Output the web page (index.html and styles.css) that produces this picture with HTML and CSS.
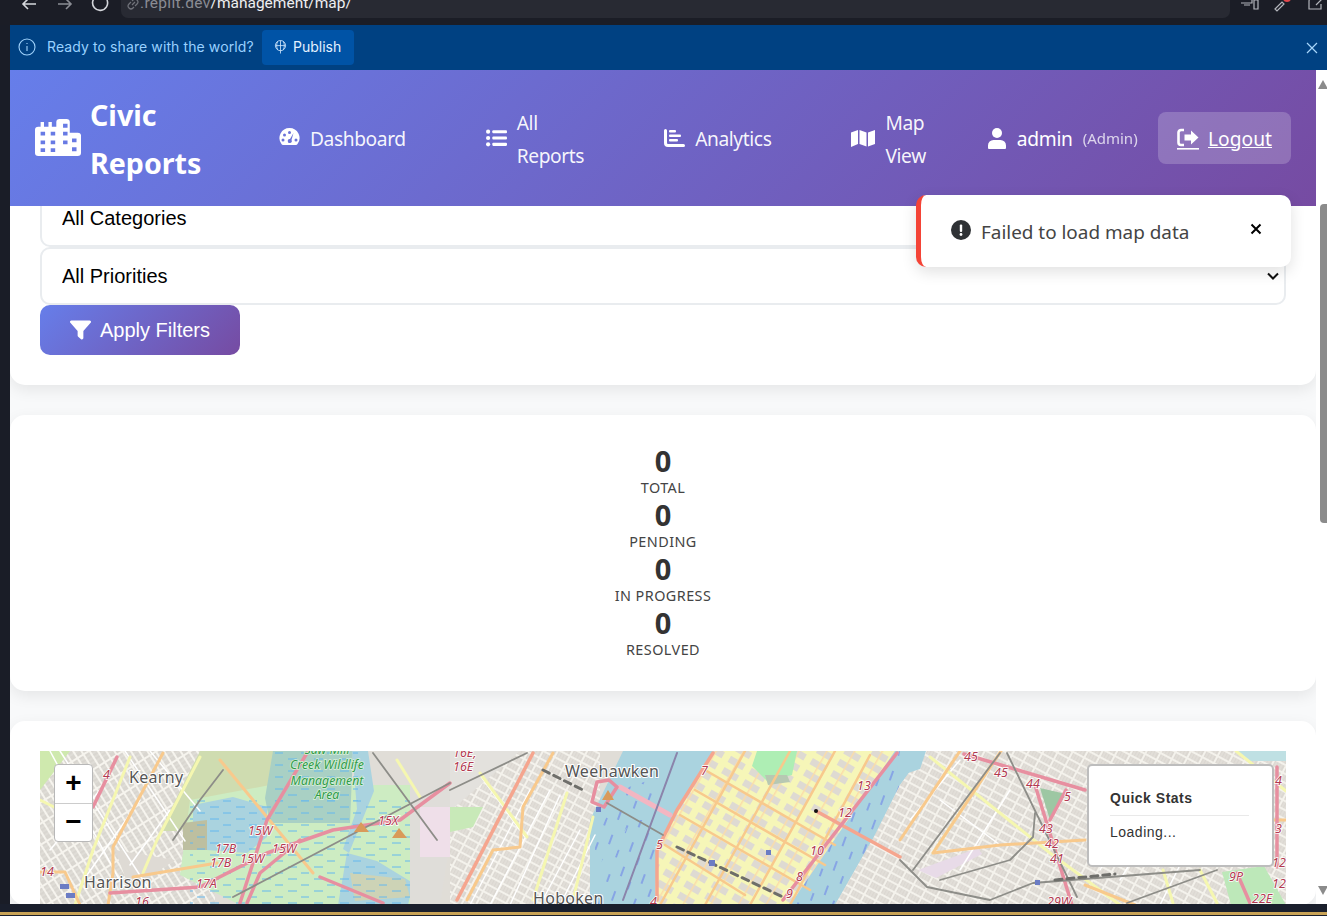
FILE: index.html
```html
<!DOCTYPE html>
<html lang="en">

<head>
    <meta charset="UTF-8">
    <meta name="viewport" content="width=device-width, initial-scale=1.0">
    <title>Map View - Civic Reports</title>
    <link rel="stylesheet" href="styles.css">
</head>

<body>
    <!-- browser chrome, cut at the top of the shot -->
    <div class="chrome">
        <svg class="chrome-icon back" viewBox="0 0 16 16"><path d="M15 5H2M7 0 2 5l5 5" /></svg>
        <svg class="chrome-icon forward" viewBox="0 0 16 16"><path d="M1 5h13M9 0l5 5-5 5" /></svg>
        <svg class="chrome-icon reload" viewBox="0 0 18 18"><path d="M16 6A7.500 7.500 0 1 1 13 2.500M16 0v5h-5" /></svg>
        <div class="urlbar">
            <svg class="url-link" viewBox="0 0 14 14"><path d="M6 8 9 5M5 5 3 7a2.500 2.500 0 0 0 4 4l1-1M9 9l2-2a2.500 2.500 0 0 0-4-4L6 4" /></svg>
            <span class="url-host">.replit.dev</span><span class="url-path">/management/map/</span>
        </div>
        <div class="chrome-right">
            <svg class="chrome-tool" viewBox="0 0 20 14"><path d="M1 1h11v5H1M4 8h6M14 3h4v9h-4z" /></svg>
            <svg class="chrome-tool" viewBox="0 0 20 14"><path d="M2 12l7-7 2 2-7 7z" /><circle class="chrome-dot" cx="14" cy="1" r="4" /></svg>
            <svg class="chrome-tool" viewBox="0 0 20 14"><path d="M12 2H5a2 2 0 0 0-2 2v8h12V7M10 8l7-7" /></svg>
        </div>
    </div>

    <div class="replit-bar">
        <svg class="rb-info" viewBox="0 0 18 18"><circle cx="9" cy="9" r="8" /><path d="M9 8v5M9 5v1" /></svg>
        <span class="rb-text">Ready to share with the world?</span>
        <button class="rb-publish">
            <svg viewBox="0 0 14 14"><circle cx="7" cy="5.500" r="5.500" /><path d="M7 0v14M1.500 5.500h11M4 1c-1.500 3-1.500 6 0 9M10 1c1.500 3 1.500 6 0 9" /></svg>
            <span>Publish</span>
        </button>
        <svg class="rb-close" viewBox="0 0 12 12"><path d="M1 1l10 10M11 1 1 11" /></svg>
    </div>

    <div class="window">
        <div class="page">
            <header class="topbar">
                <a class="brand">
                    <svg class="brand-icon" viewBox="0 0 41 38" preserveAspectRatio="none">
                        <path fill-rule="evenodd" d="M5 8V3h3v5h4V3h3v5h4V3a3 3 0 0 1 3-3h6a3 3 0 0 1 3 3v11h7a3 3 0 0 1 3 3v18a3 3 0 0 1-3 3H3a3 3 0 0 1-3-3V11a3 3 0 0 1 3-3zM5 13v4h4v-4zM5 22v4h4v-4zM5 30v4h4v-4zM14 13v4h4v-4zM14 22v4h4v-4zM14 30v4h4v-4zM25 5v4h4V5zM25 13v4h4v-4zM25 22v4h4v-4zM33 20v4h4v-4zM33 29v4h4v-4z" />
                    </svg>
                    <span class="brand-name">Civic Reports</span>
                </a>
                <nav class="nav">
                    <a class="nav-link">
                        <svg class="nav-icon" viewBox="0 0 20 20"><path fill-rule="evenodd" d="M10 0a10 10 0 0 1 8 16c-.500.700-1 1-2 1H4c-1 0-1.500-.300-2-1A10 10 0 0 1 10 0zM10 3a1.500 1.500 0 1 0 0 3 1.500 1.500 0 0 0 0-3zM5 5.500a1.500 1.500 0 1 0 0 3 1.500 1.500 0 0 0 0-3zM3.500 10.500a1.500 1.500 0 1 0 0 3 1.500 1.500 0 0 0 0-3zM16.500 10.500a1.500 1.500 0 1 0 0 3 1.500 1.500 0 0 0 0-3zM14 5l-3.500 6a2 2 0 1 0 1.500 1z" /></svg>
                        <span>Dashboard</span>
                    </a>
                    <a class="nav-link">
                        <svg class="nav-icon" viewBox="0 0 20 18"><circle cx="2" cy="3" r="2" /><circle cx="2" cy="9" r="2" /><circle cx="2" cy="15" r="2" /><rect x="6" y="1.500" width="14" height="3" rx="1" /><rect x="6" y="7.500" width="14" height="3" rx="1" /><rect x="6" y="13.500" width="14" height="3" rx="1" /></svg>
                        <span class="nav-wrap">All Reports</span>
                    </a>
                    <a class="nav-link">
                        <svg class="nav-icon" viewBox="0 0 21 18"><path d="M0 1.500a1.500 1.500 0 0 1 3 0V14a1 1 0 0 0 1 1h15.500a1.500 1.500 0 0 1 0 3H4a4 4 0 0 1-4-4z" /><rect x="5" y="1" width="7" height="2.500" rx="1" /><rect x="5" y="5.500" width="12" height="2.500" rx="1" /><rect x="5" y="10" width="9" height="2.500" rx="1" /></svg>
                        <span>Analytics</span>
                    </a>
                    <a class="nav-link">
                        <svg class="nav-icon map-icon" viewBox="0 0 24 18"><path d="M0 3.500 7 1v14l-7 3zM8.500 1l7 2.500v14l-7-2.500zM17 3.500 24 1v14l-7 2.500z" /></svg>
                        <span class="nav-wrap">Map View</span>
                    </a>
                </nav>
                <div class="account">
                    <svg class="account-icon" viewBox="0 0 18 21"><circle cx="9" cy="5" r="5" /><path d="M5.500 12h7A5.500 5.500 0 0 1 18 17.500V20a1 1 0 0 1-1 1H1a1 1 0 0 1-1-1v-2.500A5.500 5.500 0 0 1 5.500 12z" /></svg>
                    <span class="account-name">admin</span>
                    <span class="account-role">(Admin)</span>
                </div>
                <a class="logout">
                    <svg class="logout-icon" viewBox="0 0 22 22"><path d="M7 2H4a2.500 2.500 0 0 0-2.500 2.500v10A2.500 2.500 0 0 0 4 17h3" class="logout-bracket" /><path d="M21.500 9.500 14 2.500v4H7.500v6H14v4z" /><rect y="20" width="22" height="1.600" /></svg>
                    <span class="logout-text">Logout</span>
                </a>
            </header>

            <div class="toast">
                <svg class="toast-icon" viewBox="0 0 20 20"><circle cx="10" cy="10" r="10" /><rect class="toast-mark" x="8.800" y="4.500" width="2.400" height="7.500" rx="1" /><circle class="toast-mark" cx="10" cy="14.500" r="1.400" /></svg>
                <span class="toast-text">Failed to load map data</span>
                <svg class="toast-close" viewBox="0 0 12 12"><path d="M1.500 1.500l9 9M10.500 1.500l-9 9" /></svg>
            </div>

            <main class="content">
                <section class="card filters">
                    <select class="filter-select first">
                        <option>All Categories</option>
                    </select>
                    <select class="filter-select">
                        <option>All Priorities</option>
                    </select>
                    <button class="apply-btn">
                        <svg viewBox="0 0 22 20"><path d="M1.500 0h19a1.500 1.500 0 0 1 1.100 2.500L14 11v7.500a1.500 1.500 0 0 1-2.400 1.100l-3-2.500A1.500 1.500 0 0 1 8 16v-5L.400 2.500A1.500 1.500 0 0 1 1.500 0z" /></svg>
                        Apply Filters
                    </button>
                </section>

                <section class="card stats">
                    <div class="stat"><div class="stat-num">0</div><div class="stat-label">Total</div></div>
                    <div class="stat"><div class="stat-num">0</div><div class="stat-label">Pending</div></div>
                    <div class="stat"><div class="stat-num">0</div><div class="stat-label">In Progress</div></div>
                    <div class="stat"><div class="stat-num">0</div><div class="stat-label">Resolved</div></div>
                </section>

                <section class="card map-card">
                    <div class="map">
                        <!-- coordinates in the viewBox follow the window, so map features read as screen positions -->
                        <svg class="tiles" viewBox="40 751 1246 154" preserveAspectRatio="none">
                            <defs>
                                <pattern id="homes" width="13" height="8" patternUnits="userSpaceOnUse" patternTransform="rotate(28)">
                                    <rect width="13" height="8" fill="#f4f2ec" />
                                    <rect x="1" y="1" width="11" height="6" fill="#dbd7d1" />
                                    <path d="M3 1v6M6 1v6M9 1v6" stroke="#efece6" stroke-width=".6" />
                                </pattern>
                                <pattern id="homes2" width="18" height="7" patternUnits="userSpaceOnUse" patternTransform="rotate(58)">
                                    <rect width="18" height="7" fill="#f6f4ee" />
                                    <rect x="1" y="1" width="16" height="5" fill="#d9d6d0" />
                                    <path d="M4 1v5M8 1v5M12 1v5" stroke="#efece6" stroke-width=".6" />
                                </pattern>
                                <pattern id="midtown" width="24" height="13" patternUnits="userSpaceOnUse" patternTransform="rotate(30)">
                                    <rect width="24" height="13" fill="#f6f6b8" />
                                    <rect x="3" y="3" width="17" height="7" fill="#dedad2" />
                                    <rect x="11" y="0" width="1.500" height="13" fill="#fbdca8" />
                                </pattern>
                                <pattern id="marsh" width="26" height="12" patternUnits="userSpaceOnUse">
                                    <path d="M2 3h9M15 9h8" stroke="#63b8ee" stroke-width="1" />
                                </pattern>
                                <pattern id="ripple" width="22" height="26" patternUnits="userSpaceOnUse" patternTransform="rotate(20)">
                                    <path d="M3 3v10M14 15v8" stroke="#6a80ea" stroke-width="1.100" />
                                </pattern>
                            </defs>

                            <g class="base">
                                <rect x="40" y="751" width="1246" height="154" fill="#e0ddd7" />
                                <!-- west side -->
                                <rect x="40" y="751" width="175" height="154" fill="url(#homes2)" />
                                <path d="M40 751h30L40 790z" fill="#cfe9ae" />
                                <path d="M175 860l-60-10 15 40z" fill="#dedad4" />
                                <!-- the meadows -->
                                <path d="M200 751h100l-10 40-70 10-40 30-20 0z" fill="#cfdcb0" />
                                <path d="M190 800l80-15h140l10 30-10 90H240l-60-30z" fill="#cdecc2" />
                                <path d="M273 751h80l-3 72-80 0-5-25z" fill="#a9d0c4" />
                                <path d="M193 805l40-8 34 10 0 30-20 16-40-3-14-25z" fill="#aad3df" />
                                <path d="M183 823l24-3v30h-24z" fill="#bdbfa0" />
                                <path d="M347 853l30 8 36 22-5 22h-70z" fill="#aad3df" />
                                <path d="M350 873l55 6 5 18-55 4z" fill="#cdd3b6" />
                                <path d="M352 751h16l6 40-25 62-6-4 14-40z" fill="#aad3df" />
                                <path d="M190 800h220v105H190z" fill="url(#marsh)" />
                                <path d="M273 751h85v50h-85z" fill="url(#marsh)" />
                                <!-- past the turnpike -->
                                <path d="M410 751h55l-25 154h-30z" fill="#dfddd9" />
                                <path d="M420 807h30v50h-30z" fill="#efdfe9" />
                                <rect x="450" y="751" width="150" height="154" fill="url(#homes)" />
                                <path d="M450 751h70l-70 60z" fill="#e3e1dd" />
                                <path d="M450 807h33l-10 20-23 5z" fill="#c8e9b8" />
                                <!-- hudson -->
                                <path d="M623 751h90l-36 59-20 40-2 55h-65v-85z" fill="#aad3df" />
                                <path d="M620 790l60-20-40 40-45 60v-30zM630 820h25v85h-60z" fill="url(#ripple)" />
                                <!-- manhattan -->
                                <path d="M713 751h182l-105 154H655l2-55 20-40z" fill="url(#midtown)" />
                                <path d="M757 751h40l-5 24-25 6-15-15z" fill="#aeeeb4" />
                                <path d="M765 775h22l3 7-22 3z" fill="#b7c8b2" />
                                <!-- east river -->
                                <path d="M895 751h30l-25 34-25 50-40 70h-45z" fill="#aad3df" />
                                <path d="M895 751h30l-25 34-25 50-40 70h-45z" fill="url(#ripple)" />
                                <!-- queens -->
                                <path d="M925 751h361v154H835l40-70 25-50z" fill="url(#homes)" />
                                <path d="M900 751h26l-6 18-24 8z" fill="#aad3df" />
                                <path d="M1040 788l26 6-16 26z" fill="#9dc7a3" />
                                <path d="M1222 872l42-6 22 39h-55z" fill="#bde8b9" />
                                <path d="M918 870l60-22 4 6-46 24z" fill="#e8dbe8" />
                                <path d="M1236 751h50v10h-38z" fill="#bfe0e3" />

                                <!-- streets -->
                                <path class="rd-minor" d="M50 751l70 130M60 751l90 140M125 751l60 90M150 751l50 60M100 790l-50 60M140 800l-60 85M170 810l-40 55M470 905l60-115M490 905l60-115M510 905l50-110M540 905l40-75M560 905l35-70M480 775l45 62M960 760l-50 60M1120 880l60-100M1160 905l50-100M1010 790l-50 80M1100 870l40-70M940 800l60 45" />
                                <path class="rd-second" d="M130 757 93 850 75 905M200 757l-43 83-14 33M40 800l50 25M397 760l23 37M480 773l47 64M567 793l-34 107M593 817l-20 83M930 757l120 96 70 52M990 767l-57 86M1163 870l10 33M1200 870l17 33M1236 751l50 40" />
                                <path class="rd-prime" d="M163 753 113 847v26l-5 32M133 877l84-14M220 760l93 113M553 753l-30 54-3 40-27 3-26 50M40 872h25l15 33M1001 751l-68 102 67-8 85-5M960 751l-60 89M1085 885l50 20M1240 820h46" />
                                <path class="rd-prime thin" d="M705 770l130 75M695 790l130 75M680 815l130 75M665 845l80 50M745 751l-85 154M790 751l-85 154M835 751l-85 154M870 755l-80 150" />
                                <path class="rd-trunk" d="M533 753 457 900M713 753 677 810 657 850v50M816 811l84 46" />
                                <path class="rd-bridge" d="M620 787l50 28" />
                                <path class="rd-motor" d="M117 757 93 807M110 893l90-6 67-34 66-23 67-10 50-37M240 903l27-83 40-67M247 903l13-30 40-33M320 877l63 26M597 782l-5 20 12 5 13-20-8-7zM897 753 783 900M964 754l121 36M1035 785l37 120M1066 790l-16 30M1277 767v100M1237 873l13 30" />
                                <path class="rd-rail" d="M173 840l27-40 23-30M233 897l217-114M373 753l64 87M527 753l-77 37M607 803l56 32M900 860l27 27 63 13 43-17 167-13M940 880l70-20 23-23 2-24M1127 903l90-33M1000 753l-87 117M1007 753l70 144" />
                                <path class="rd-dash" d="M677 847l106 50M543 770l40 20M1055 880l60-6" />
                                <path class="rd-purple" d="M677 753l-54 147" />
                                <circle cx="816" cy="811" r="2" fill="#111" />
                                <path d="M602 800l6-10 6 10z" fill="#d99a59" />
                                <path d="M354 832l7-10 8 10zM392 838l7-10 8 10z" fill="#d99a59" />
                                <rect x="596" y="807" width="5" height="5" fill="#6b7cc4" />
                                <rect x="766" y="850" width="5" height="5" fill="#6b7cc4" />
                                <rect x="709" y="860" width="6" height="6" fill="#6b7cc4" />
                                <rect x="1035" y="880" width="5" height="5" fill="#6b7cc4" />
                                <rect x="60" y="884" width="9" height="5" fill="#6b7cc4" />
                                <rect x="66" y="893" width="9" height="5" fill="#6b7cc4" />
                            </g>

                            <g class="map-green">
                                <text x="327" y="769">Creek Wildlife</text>
                                <text x="327" y="785">Management</text>
                                <text x="327" y="799">Area</text>
                                <text x="327" y="754">Saw Mill</text>
                            </g>
                            <g class="map-town">
                                <text x="129" y="783">Kearny</text>
                                <text x="84" y="888">Harrison</text>
                                <text x="565" y="777">Weehawken</text>
                                <text x="533" y="904">Hoboken</text>
                            </g>
                            <g class="map-ref">
                                <text x="103" y="779">4</text>
                                <text x="248" y="835">15W</text>
                                <text x="272" y="853">15W</text>
                                <text x="240" y="863">15W</text>
                                <text x="215" y="853">17B</text>
                                <text x="210" y="867">17B</text>
                                <text x="196" y="888">17A</text>
                                <text x="378" y="825">15X</text>
                                <text x="40" y="876">14</text>
                                <text x="135" y="906">16</text>
                                <text x="453" y="757">16E,</text>
                                <text x="453" y="771">16E</text>
                                <text x="701" y="775">7</text>
                                <text x="656" y="849">5</text>
                                <text x="650" y="906">4</text>
                                <text x="857" y="790">13</text>
                                <text x="838" y="817">12</text>
                                <text x="810" y="855">10</text>
                                <text x="796" y="881">8</text>
                                <text x="786" y="898">9</text>
                                <text x="964" y="761">45</text>
                                <text x="994" y="777">45</text>
                                <text x="1026" y="788">44</text>
                                <text x="1064" y="801">5</text>
                                <text x="1039" y="833">43</text>
                                <text x="1045" y="848">42</text>
                                <text x="1050" y="863">41</text>
                                <text x="1047" y="906">29W</text>
                                <text x="1229" y="881">9P</text>
                                <text x="1272" y="867">12</text>
                                <text x="1272" y="888">12</text>
                                <text x="1252" y="903">22E</text>
                                <text x="1275" y="785">4</text>
                                <text x="1275" y="833">3</text>
                            </g>
                        </svg>
                        <div class="zoom-ctl">
                            <a class="zoom-btn">+</a>
                            <a class="zoom-btn">−</a>
                        </div>
                        <div class="quick-stats">
                            <h4>Quick Stats</h4>
                            <p>Loading...</p>
                        </div>
                    </div>
                </section>
            </main>
        </div>

        <div class="scrollbar">
            <span class="sb-up"></span>
            <span class="sb-thumb"></span>
            <span class="sb-down"></span>
        </div>
    </div>

    <div class="statusline"></div>
</body>

</html>
```
FILE: styles.css
```css
* {
    box-sizing: border-box;
}

html,
body {
    height: 100%;
}

body {
    margin: 0;
    height: 916px;
    background: #1a1d27;
    display: flex;
    flex-direction: column;
    overflow: hidden;
    font-family: "Noto Sans", "Open Sans", sans-serif;
}

/* browser chrome */
.chrome {
    height: 25px;
    flex: none;
    display: flex;
    align-items: flex-start;
    background: #1b1d26;
    overflow: hidden;
    position: relative;
}

.chrome-icon {
    width: 16px;
    height: 16px;
    margin-top: -1px;
    fill: none;
    stroke: #d5d7dc;
    stroke-width: 1.6;
    flex: none;
}

.back {
    margin-left: 21px;
}

.forward {
    margin-left: 20px;
    stroke: #8b8d94;
}

.reload {
    width: 18px;
    height: 18px;
    margin-left: 18px;
    margin-top: -6px;
}

.urlbar {
    margin-left: 12px;
    width: 1109px;
    height: 18px;
    background: #282a33;
    border-radius: 0 0 7px 7px;
    display: flex;
    align-items: flex-start;
    font-family: Roboto, sans-serif;
    font-size: 15.500px;
    line-height: 18px;
    padding-left: 5px;
}

.urlbar span {
    margin-top: -6px;
}

.url-link {
    width: 14px;
    height: 14px;
    margin-top: -3px;
    fill: none;
    stroke: #71737b;
    stroke-width: 1.2;
}

.url-host {
    color: #8a8c93;
    letter-spacing: .3px;
}

.url-path {
    color: #eeeff1;
}

.chrome-right {
    margin-left: 10px;
    display: flex;
    gap: 13px;
}

.chrome-tool {
    width: 20px;
    height: 14px;
    margin-top: -3px;
    fill: none;
    stroke: #b4b6bc;
    stroke-width: 1.2;
    overflow: visible;
}

.chrome-dot {
    fill: #e5484d;
    stroke: none;
}

/* replit publish strip */
.replit-bar {
    height: 45px;
    flex: none;
    margin-left: 10px;
    background: #004182;
    display: flex;
    align-items: center;
    padding-left: 8px;
    font-family: Inter, Roboto, sans-serif;
    font-size: 14px;
}

.rb-info {
    width: 18px;
    height: 18px;
    margin-bottom: 1px;
    fill: none;
    stroke: #9fd2fb;
    stroke-width: 1.1;
}

.rb-text {
    margin-left: 11px;
    margin-bottom: 2px;
    color: #99d1ff;
    letter-spacing: .1px;
}

.rb-publish {
    margin-left: 8px;
    height: 35px;
    width: 92px;
    padding: 0 0 2px;
    display: flex;
    align-items: center;
    justify-content: center;
    gap: 6px;
    background: #0053a6;
    border: none;
    border-radius: 4px;
    color: #e3f1ff;
    font: inherit;
}

.rb-publish svg {
    width: 13px;
    height: 14px;
    fill: none;
    stroke: #cfe6fb;
    stroke-width: .9;
}

.rb-close {
    margin-left: auto;
    margin-right: 9px;
    width: 12px;
    height: 12px;
    fill: none;
    stroke: #a8d6fb;
    stroke-width: 1.2;
}

/* page */
.window {
    flex: 1;
    min-height: 0;
    display: flex;
    margin-left: 10px;
    background: #fff;
}

.page {
    flex: 1;
    min-width: 0;
    display: flex;
    flex-direction: column;
    position: relative;
    background: #f8f9fa;
}

.topbar {
    height: 136px;
    flex: none;
    position: relative;
    z-index: 2;
    display: flex;
    align-items: center;
    padding: 0 25px;
    background: linear-gradient(135deg, #667eea 0%, #764ba2 100%);
    color: #fff;
}

.brand {
    display: flex;
    align-items: center;
    gap: 9px;
    width: 244px;
    flex: none;
    padding-top: 2px;
    font-size: 28.600px;
    font-weight: 700;
    line-height: 48px;
}

.brand-icon {
    width: 46px;
    height: 37px;
    margin-top: -3px;
    fill: #fff;
    flex: none;
}

.brand-name {
    width: min-content;
}

.nav {
    display: flex;
    align-items: center;
    gap: 80px;
    font-size: 19.200px;
    letter-spacing: -.4px;
    line-height: 33px;
}

.nav-link {
    display: flex;
    align-items: center;
    gap: 10px;
    color: rgba(255, 255, 255, .95);
}

.nav-icon {
    width: 21px;
    height: 20px;
    fill: #fff;
    flex: none;
}

.map-icon {
    width: 24px;
}

.nav-wrap {
    width: min-content;
    padding-top: 1px;
}

.account {
    margin-left: 62px;
    display: flex;
    align-items: center;
    flex: none;
}

.account-icon {
    width: 18px;
    height: 21px;
    fill: #fff;
}

.account-name {
    margin-left: 11px;
    font-size: 19.200px;
    letter-spacing: -.3px;
}

.account-role {
    margin-left: 10px;
    font-size: 15px;
    opacity: .75;
}

.logout {
    margin-left: auto;
    width: 133px;
    height: 52px;
    flex: none;
    display: flex;
    align-items: center;
    justify-content: center;
    gap: 9px;
    border-radius: 8px;
    background: rgba(255, 255, 255, .2);
    font-size: 19.200px;
    text-decoration: underline;
}

.logout-icon {
    width: 22px;
    height: 22px;
    margin-top: 2px;
    fill: #fff;
}

.logout-bracket {
    fill: none;
    stroke: #fff;
    stroke-width: 2.600;
}

.logout-text {
    text-decoration: underline;
}

/* toast sits over the header edge */
.toast {
    position: absolute;
    z-index: 3;
    top: 125px;
    right: 25px;
    width: 375px;
    height: 72px;
    display: flex;
    align-items: center;
    padding: 0 29px 2px 30px;
    background: #fff;
    border-left: 5px solid #f44336;
    border-radius: 10px;
    box-shadow: 0 5px 15px rgba(0, 0, 0, .12);
    color: #444;
    font-size: 18.900px;
}

.toast-icon {
    width: 20px;
    height: 20px;
    margin-bottom: 1px;
    fill: #2f3235;
    flex: none;
}

.toast-mark {
    fill: #fff;
}

.toast-text {
    margin-left: 10px;
    margin-top: 4px;
}

.toast-close {
    margin-left: auto;
    width: 12px;
    height: 12px;
    margin-bottom: 2px;
    fill: none;
    stroke: #000;
    stroke-width: 2;
}

/* scrolled content */
.content {
    flex: 1;
    min-height: 0;
    overflow: hidden;
}

.card {
    background: #fff;
    border-radius: 15px;
    box-shadow: 0 5px 15px rgba(0, 0, 0, .08);
    padding: 30px;
    margin-bottom: 30px;
}

.filters {
    padding-top: 0;
    padding-bottom: 30px;
    border-radius: 0 0 15px 15px;
}

.filter-select {
    display: block;
    width: 100%;
    height: 58px;
    padding: 0 30px 0 20px;
    border: 2px solid #e9ecef;
    border-radius: 10px;
    appearance: none;
    background: #fff url("data:image/svg+xml,%3Csvg xmlns='http://www.w3.org/2000/svg' viewBox='0 0 12 8'%3E%3Cpath d='M1 1.500l5 5 5-5' fill='none' stroke='%23111' stroke-width='2'/%3E%3C/svg%3E") no-repeat right 5px center / 12px 8px;
    color: #000;
    font-family: "Liberation Sans", Arial, sans-serif;
    font-size: 20px;
}

.filter-select.first {
    margin-top: -17px;
    margin-bottom: 0;
}

.apply-btn {
    width: 200px;
    height: 50px;
    display: flex;
    align-items: center;
    justify-content: center;
    gap: 9px;
    border: none;
    border-radius: 10px;
    background: linear-gradient(135deg, #667eea 0%, #764ba2 100%);
    color: #fff;
    font-family: "Liberation Sans", Arial, sans-serif;
    font-size: 20px;
}

.apply-btn svg {
    width: 21px;
    height: 20px;
    fill: #fff;
}

.stats {
    height: 276px;
    padding-top: 29px;
    text-align: center;
    color: #333;
}

.stat {
    height: 54px;
}

.stat-num {
    font-size: 29px;
    font-weight: 700;
    line-height: 34px;
}

.stat-label {
    font-size: 14.400px;
    line-height: 20px;
    text-transform: uppercase;
    letter-spacing: .45px;
    color: #444;
}

.map-card {
    margin-bottom: 0;
    padding-bottom: 0;
}

.map {
    position: relative;
    height: 154px;
    overflow: hidden;
}

.tiles {
    display: block;
    width: 100%;
    height: 100%;
}

.base {
    filter: blur(.45px);
}

.rd-minor,
.rd-second,
.rd-prime,
.rd-trunk,
.rd-bridge,
.rd-motor,
.rd-rail,
.rd-dash,
.rd-purple {
    fill: none;
    stroke-linecap: round;
    stroke-linejoin: round;
}

.rd-minor {
    stroke: #fff;
    stroke-width: 1.500;
}

.rd-second {
    stroke: #f5f7b0;
    stroke-width: 3;
}

.rd-prime {
    stroke: #f8c98c;
    stroke-width: 3;
}

.rd-prime.thin {
    stroke-width: 2.500;
}

.rd-trunk {
    stroke: #f5a58e;
    stroke-width: 3.500;
}

.rd-bridge {
    stroke: #f3b6c2;
    stroke-width: 5;
}

.rd-motor {
    stroke: #e78fa0;
    stroke-width: 3.500;
}

.rd-rail {
    stroke: #8d8d88;
    stroke-width: 1.800;
}

.rd-dash {
    stroke: #6e6e6a;
    stroke-width: 3;
    stroke-dasharray: 7 5;
}

.rd-purple {
    stroke: #8b84ab;
    stroke-width: 2;
}

.map-town text {
    font-size: 16px;
    letter-spacing: .3px;
    fill: #555;
    stroke: #fff;
    stroke-width: 2px;
    paint-order: stroke;
}

.map-ref text {
    font-size: 12.500px;
    font-style: italic;
    fill: #b23a50;
    stroke: #fff;
    stroke-width: 1.500px;
    paint-order: stroke;
}

.map-green text {
    font-size: 12.300px;
    font-style: italic;
    text-anchor: middle;
    fill: #2f9a4a;
    stroke: #d8f0d8;
    stroke-width: 1.500px;
    paint-order: stroke;
}

.zoom-ctl {
    position: absolute;
    top: 13px;
    left: 14px;
    width: 39px;
    border: 1px solid #b8b8b8;
    border-radius: 4px;
    background: #fff;
    overflow: hidden;
}

.zoom-btn {
    display: block;
    height: 38px;
    line-height: 36px;
    text-align: center;
    color: #000;
    font-family: "Liberation Sans", Arial, sans-serif;
    font-size: 28px;
    font-weight: 700;
}

.zoom-btn + .zoom-btn {
    border-top: 1px solid #ccc;
}

.quick-stats {
    position: absolute;
    top: 13px;
    right: 12px;
    width: 187px;
    height: 103px;
    padding: 24px 23px 0 21px;
    border: 2px solid #bdbdbd;
    border-radius: 5px;
    background: #fff;
    color: #333;
    font-family: "Liberation Sans", Arial, sans-serif;
    font-size: 14px;
}

.quick-stats h4 {
    margin: 0;
    padding-bottom: 8px;
    border-bottom: 1px solid #e9e9e9;
    font-size: 14px;
    line-height: 17px;
    letter-spacing: .5px;
}

.quick-stats p {
    margin: 8px 0 0;
    line-height: 17px;
    letter-spacing: .5px;
}

/* right scrollbar, drawn because the shot has one */
.scrollbar {
    width: 11px;
    flex: none;
    display: flex;
    flex-direction: column;
    align-items: flex-end;
    background: #fff;
    padding-top: 10px;
}

.sb-up,
.sb-down {
    width: 0;
    height: 0;
    margin-right: -1px;
    border-left: 5px solid transparent;
    border-right: 5px solid transparent;
}

.sb-up {
    border-bottom: 9px solid #8b8b8b;
}

.sb-down {
    margin-top: 363px;
    border-top: 9px solid #8b8b8b;
}

.sb-thumb {
    width: 7px;
    height: 319px;
    margin-top: 115px;
    background: #8b8b8b;
    border-radius: 4px 0 0 4px;
}

.statusline {
    height: 12px;
    flex: none;
    background: linear-gradient(#1a1f2c 8px, #c9a356 8px, #c9a356 11px, #1a1f2c 11px);
}
```
